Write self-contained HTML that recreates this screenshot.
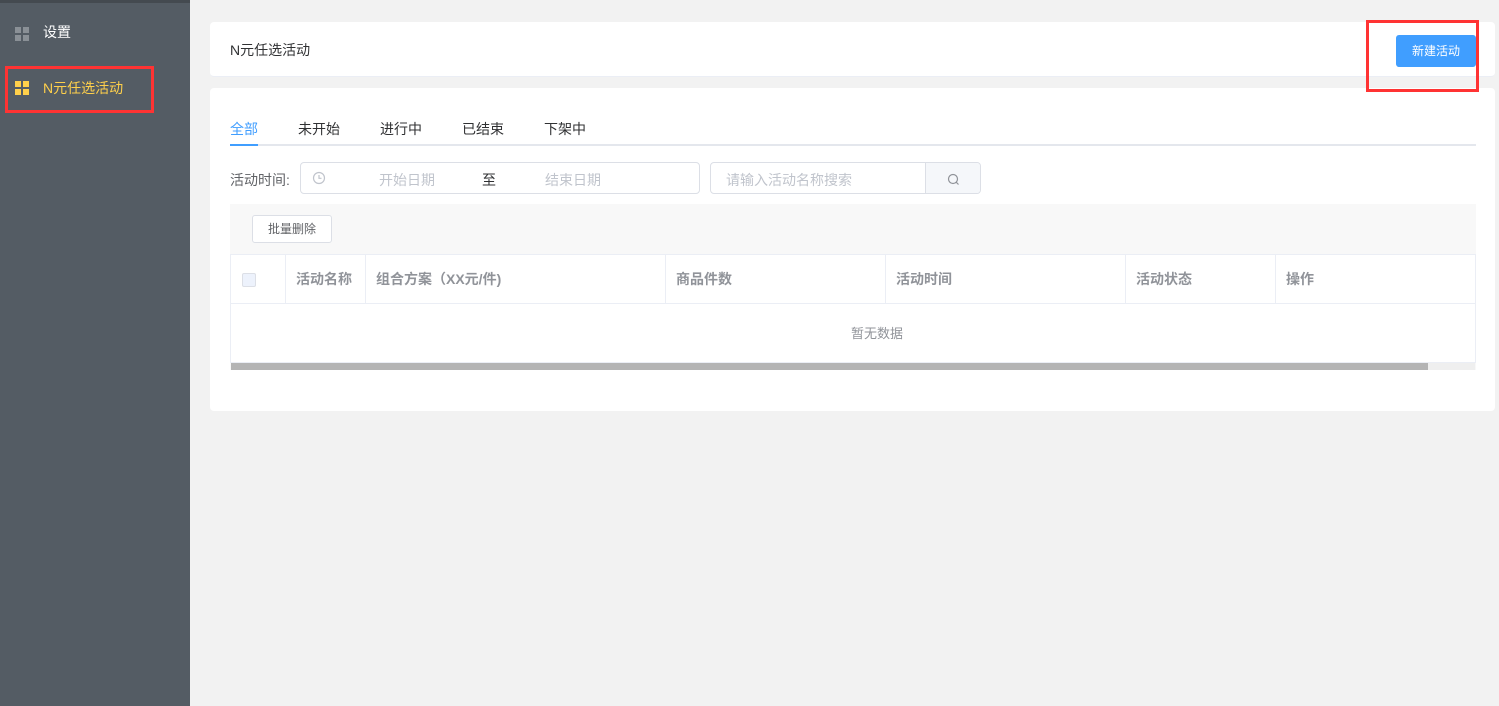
<!DOCTYPE html>
<html><head><meta charset="utf-8"><style>
*{margin:0;padding:0;box-sizing:border-box}
body{width:1499px;height:706px;background:#f2f2f2;font-family:"Liberation Sans","Noto Sans CJK SC",sans-serif;font-size:14px;color:#303133;position:relative;overflow:hidden}
.abs{position:absolute}
.side{left:0;top:0;width:190px;height:706px;background:#545c64;border-top:3px solid #444a50}
.ic{display:grid;grid-template-columns:6px 6px;gap:2px}
.ic i{width:6px;height:6px;display:block}
.card{background:#fff;border-radius:4px}
.th{position:absolute;top:0;height:49px;line-height:49px;padding-left:10px;border-right:1px solid #ebeef5;color:#909399;font-weight:bold;font-size:14px}
</style></head><body>
<div class="abs side">
 <div class="abs ic" style="left:15px;top:24px"><i style="background:#8a9096"></i><i style="background:#8a9096"></i><i style="background:#8a9096"></i><i style="background:#8a9096"></i></div>
 <div class="abs" style="left:43px;top:19px;color:#fff;font-size:14px">设置</div>
 <div class="abs ic" style="left:15px;top:78px"><i style="background:#ffd04b"></i><i style="background:#ffd04b"></i><i style="background:#ffd04b"></i><i style="background:#ffd04b"></i></div>
 <div class="abs" style="left:43px;top:75px;color:#ffd04b;font-size:14px">N元任选活动</div>
</div>

<div class="abs card" style="left:210px;top:22px;width:1285px;height:55px;border-bottom:1px solid #ebeef5">
 <div class="abs" style="left:20px;top:18px;font-size:14px">N元任选活动</div>
 <div class="abs" style="left:1186px;top:13px;width:80px;height:32px;background:#409eff;border-radius:3px;color:#fff;font-size:12px;text-align:center;line-height:32px">新建活动</div>
</div>

<div class="abs card" style="left:210px;top:88px;width:1285px;height:323px">
 <div class="abs" style="left:20px;top:56px;width:1246px;height:2px;background:#e4e7ed"></div>
 <div class="abs" style="left:20px;top:56px;width:28px;height:2px;background:#409eff"></div>
 <div class="abs" style="left:20px;top:31px;color:#409eff">全部</div>
 <div class="abs" style="left:88px;top:31px">未开始</div>
 <div class="abs" style="left:170px;top:31px">进行中</div>
 <div class="abs" style="left:252px;top:31px">已结束</div>
 <div class="abs" style="left:334px;top:31px">下架中</div>
 <div class="abs" style="left:20px;top:82px;font-size:14px;color:#606266">活动时间:</div>
 <div class="abs" style="left:90px;top:74px;width:400px;height:32px;border:1px solid #dcdfe6;border-radius:4px">
  <svg class="abs" style="left:11px;top:8px" width="14" height="14" viewBox="0 0 14 14"><circle cx="7" cy="7" r="5.5" fill="none" stroke="#c0c4cc" stroke-width="1.2"/><path d="M7 4v3.3h2.5" fill="none" stroke="#c0c4cc" stroke-width="1.2"/></svg>
  <div class="abs" style="left:78px;top:7px;color:#c0c4cc">开始日期</div>
  <div class="abs" style="left:181px;top:7px;color:#303133">至</div>
  <div class="abs" style="left:244px;top:7px;color:#c0c4cc">结束日期</div>
 </div>
 <div class="abs" style="left:500px;top:74px;width:271px;height:32px;border:1px solid #dcdfe6;border-radius:4px;overflow:hidden">
  <div class="abs" style="left:15px;top:7px;color:#c0c4cc">请输入活动名称搜索</div>
  <div class="abs" style="left:214px;top:0;width:57px;height:32px;background:#f5f7fa;border-left:1px solid #dcdfe6"></div>
  <svg class="abs" style="left:236px;top:10px" width="13" height="13" viewBox="0 0 13 13"><circle cx="6" cy="6" r="4.5" fill="none" stroke="#909399" stroke-width="1.2"/><path d="M9.2 9.2l2.3 2.3" stroke="#909399" stroke-width="1.2"/></svg>
 </div>
 <div class="abs" style="left:20px;top:116px;width:1246px;height:166px;background:#f8f8f8"></div>
 <div class="abs" style="left:42px;top:127px;width:80px;height:28px;background:#fff;border:1px solid #dcdfe6;border-radius:3px;font-size:12px;text-align:center;line-height:26px;color:#606266">批量删除</div>
 <div class="abs" style="left:20px;top:166px;width:1246px;height:109px;background:#fff;border:1px solid #ebeef5">
  <div class="th" style="left:0;width:55px"><span class="abs" style="left:11px;top:18px;width:14px;height:14px;border:1px solid #dcdfe6;background:#edf2fc;border-radius:2px"></span></div>
  <div class="th" style="left:55px;width:80px">活动名称</div>
  <div class="th" style="left:135px;width:300px">组合方案（XX元/件)</div>
  <div class="th" style="left:435px;width:220px">商品件数</div>
  <div class="th" style="left:655px;width:240px">活动时间</div>
  <div class="th" style="left:895px;width:150px">活动状态</div>
  <div class="th" style="left:1045px;width:200px;border-right:none">操作</div>
  <div class="abs" style="left:0;top:48px;width:1244px;height:1px;background:#ebeef5"></div>
  <div class="abs" style="left:620px;top:68px;color:#909399;font-size:13px">暂无数据</div>
  <div class="abs" style="left:0;top:108px;width:1244px;height:7px;background:#efefef"></div>
  <div class="abs" style="left:0;top:108px;width:1197px;height:7px;background:#b4b4b4"></div>
 </div>
</div>
<div class="abs" style="left:5px;top:66px;width:149px;height:47px;border:3px solid #f33"></div>
<div class="abs" style="left:1366px;top:20px;width:113px;height:72px;border:3px solid #f33"></div>
</body></html>
